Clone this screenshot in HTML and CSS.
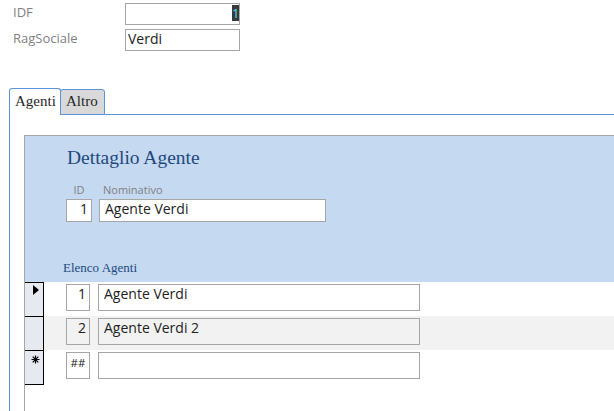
FILE: index.html
```html
<!DOCTYPE html>
<html lang="it">
<head>
    <meta charset="UTF-8">
    <title>Agenti</title>
    <link rel="stylesheet" href="styles.css">
</head>
<body>
    <div class="fields">
        <label class="field-label">IDF</label>
        <div class="textbox textbox-id"><span class="sel">1</span></div>
        <label class="field-label">RagSociale</label>
        <div class="textbox">Verdi</div>
    </div>

    <div class="tabs">
        <div class="tab tab-active">Agenti</div>
        <div class="tab tab-other">Altro</div>
        <div class="tab-fill"></div>
    </div>

    <div class="tab-page">
        <div class="subform">
            <div class="subform-header">
                <h2>Dettaglio Agente</h2>
                <div class="detail">
                    <div class="detail-col col-id">
                        <span class="cap">ID</span>
                        <div class="box box-num">1</div>
                    </div>
                    <div class="detail-col col-name">
                        <span class="cap">Nominativo</span>
                        <div class="box">Agente Verdi</div>
                    </div>
                </div>
                <div class="list-title">Elenco Agenti</div>
            </div>

            <div class="row">
                <div class="selector"><span class="arrow"></span></div>
                <div class="row-body">
                    <div class="box row-id box-num">1</div>
                    <div class="box row-name">Agente Verdi</div>
                </div>
            </div>
            <div class="row row-alt">
                <div class="selector"></div>
                <div class="row-body">
                    <div class="box row-id box-num">2</div>
                    <div class="box row-name">Agente Verdi 2</div>
                </div>
            </div>
            <div class="row row-new">
                <div class="selector">
                    <svg class="star" width="9" height="9" viewBox="0 0 9 9">
                        <path d="M4.5 0.5V8.5M0.5 4.5H8.5M1.7 1.7L7.3 7.3M7.3 1.7L1.7 7.3" stroke="#000" stroke-width="1.2"/>
                    </svg>
                </div>
                <div class="row-body">
                    <div class="box row-id box-new">##</div>
                    <div class="box row-name"></div>
                </div>
            </div>
        </div>
    </div>
</body>
</html>
```

FILE: styles.css
```css
body {
    margin: 0;
    padding-top: 3px;
    width: 614px;
    height: 411px;
    overflow: hidden;
    background: #ffffff;
    font-family: "Open Sans", sans-serif;
    color: #222222;
}
.fields {
    display: grid;
    grid-template-columns: 112px 115px;
    grid-auto-rows: 22px;
    row-gap: 4px;
    padding-left: 13px;
}
.field-label {
    font-size: 13px;
    line-height: 18px;
    color: #7f7f7f;
}
.textbox {
    box-sizing: border-box;
    height: 22px;
    border: 1px solid #a6a6a6;
    padding-left: 2px;
    font-size: 14px;
    line-height: 18px;
}
.textbox-id {
    display: flex;
    justify-content: flex-end;
    align-items: flex-start;
    padding-top: 1px;
}
.sel {
    width: 7px;
    height: 16px;
    background: #3a3a3a;
    color: #48e0ff;
    font-size: 13px;
    line-height: 16px;
    text-align: center;
}
.tabs {
    display: flex;
    align-items: flex-end;
    margin-top: 37px;
    margin-left: 9px;
    font-family: "Liberation Serif", serif;
    font-size: 15px;
    line-height: 18px;
    color: #262626;
}
.tab {
    box-sizing: border-box;
    border: 1px solid #5b93d8;
    padding-left: 5px;
}
.tab-active {
    width: 52px;
    border-bottom: none;
    border-radius: 3px 3px 0 0;
    padding-top: 3px;
    padding-bottom: 5px;
    background: #ffffff;
}
.tab-other {
    width: 45px;
    margin-left: -1px;
    border-radius: 3px 3px 0 0;
    padding-top: 2px;
    padding-bottom: 4px;
    background: #d9d9d9;
}
.tab-fill {
    flex: 1;
    height: 27px;
    box-sizing: border-box;
    border-bottom: 1px solid #5b93d8;
}
.tab-page {
    margin-left: 9px;
    height: 296px;
    border-left: 1px solid #5b93d8;
    padding: 20px 0 0 14px;
}
.subform {
    height: 276px;
    border-left: 1px solid #a6a6a6;
    border-top: 1px solid #a6a6a6;
}
.subform-header {
    height: 146px;
    box-sizing: border-box;
    padding: 10px 0 0 41px;
    background: #c5d9f1;
}
.subform-header h2 {
    margin: 0 0 13px 1px;
    font-family: "Liberation Serif", serif;
    font-weight: normal;
    font-size: 19.5px;
    line-height: 23px;
    color: #1f497d;
}
.detail {
    display: flex;
    gap: 7px;
}
.detail-col {
    display: flex;
    flex-direction: column;
    gap: 2px;
}
.col-id {
    width: 26px;
    align-items: center;
}
.col-name {
    width: 227px;
}
.col-name .cap {
    padding-left: 4px;
}
.cap {
    font-size: 11px;
    line-height: 15px;
    color: #7f7f7f;
}
.box {
    box-sizing: border-box;
    height: 23px;
    width: 100%;
    border: 1px solid #a6a6a6;
    background: #ffffff;
    padding: 0 5px;
    font-size: 14px;
    line-height: 18px;
}
.box-num {
    text-align: right;
    padding: 0 3px;
}
.list-title {
    margin: 38px 0 0 -3px;
    font-family: "Liberation Serif", serif;
    font-size: 13px;
    line-height: 15px;
    color: #1f497d;
}
.row {
    display: flex;
}
.selector {
    box-sizing: border-box;
    width: 19px;
    height: 34px;
    border-top: 1px solid #000000;
    border-right: 1px solid #000000;
    background: #e6e9ef;
    padding: 2px 0 0 8px;
}
.row-new .selector {
    height: 35px;
    border-bottom: 1px solid #000000;
    padding: 4px 0 0 6px;
}
.arrow {
    display: block;
    width: 0;
    height: 0;
    border-left: 6px solid #000000;
    border-top: 5px solid transparent;
    border-bottom: 5px solid transparent;
}
.star {
    display: block;
}
.row-body {
    flex: 1;
    display: flex;
    gap: 8px;
    height: 34px;
    box-sizing: border-box;
    padding: 2px 0 0 22px;
}
.row-alt .row-body {
    background: #f2f2f2;
}
.row-alt .box {
    background: #f2f2f2;
}
.row-body .box {
    height: 27px;
}
.row-id {
    flex: 0 0 24px;
}
.row-name {
    flex: 0 0 322px;
}
.box-new {
    font-size: 11.5px;
    text-align: center;
    padding: 1px 0 0;
}
```
